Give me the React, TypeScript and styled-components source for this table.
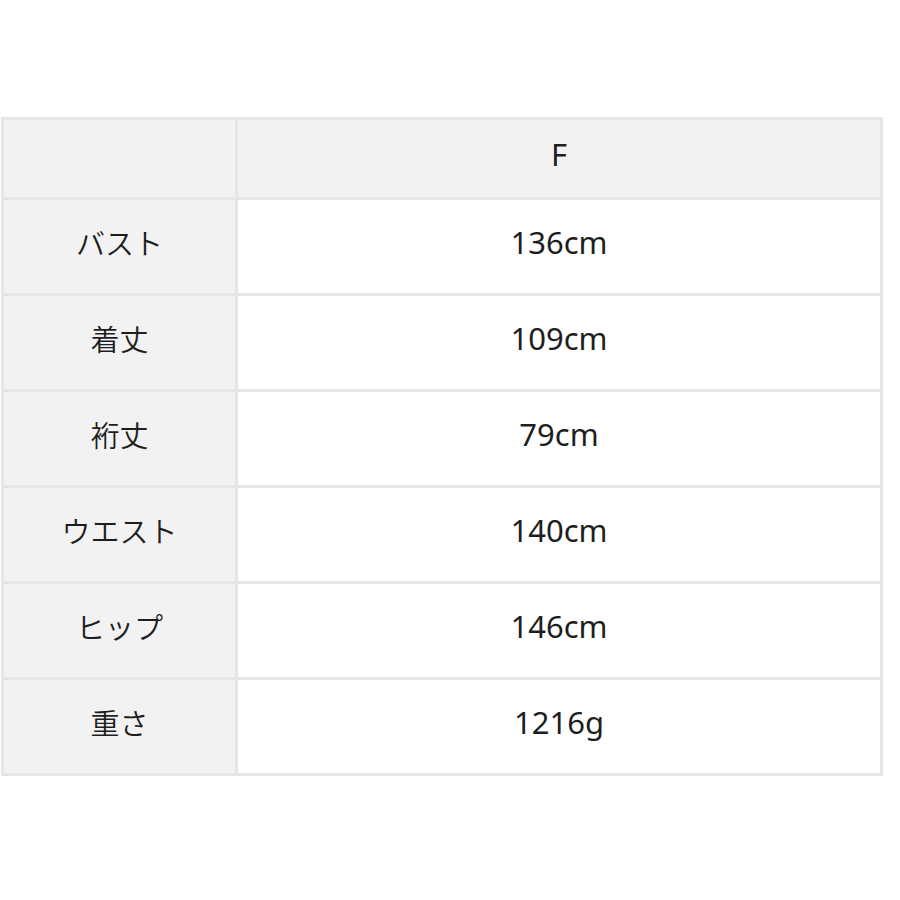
import React from "react";
import styled, { createGlobalStyle } from "styled-components";

const GlobalStyle = createGlobalStyle`
  html, body {
    margin: 0;
    padding: 0;
    background: #ffffff;
  }
  body {
    font-family: "Noto Sans", "Noto Sans CJK JP", sans-serif;
    color: #1e1e1e;
  }
`;

const Page = styled.div`
  padding: 117px 17px 0 1px;
`;

const SizeTable = styled.table`
  width: 882px;
  border-collapse: collapse;
  table-layout: fixed;
`;

const LabelCol = styled.col`
  width: 234px;
`;

const HeadRow = styled.tr`
  height: 80px;
`;

const Row = styled.tr`
  height: 96px;
`;

const Cell = styled.td<{ $shaded?: boolean }>`
  border: 3px solid #e6e6e6;
  background: ${(p) => (p.$shaded ? "#f2f2f2" : "#ffffff")};
  text-align: center;
  vertical-align: middle;
  line-height: 1;
  padding: 0 0 8px;
`;

const Label = styled(Cell)`
  font-family: "Noto Sans CJK JP", sans-serif;
  font-size: 29px;
  font-weight: 350;
`;

const Value = styled(Cell)`
  font-size: 31px;
  font-weight: 400;
`;

const rows = [
  { label: "バスト", value: "136cm" },
  { label: "着丈", value: "109cm" },
  { label: "裄丈", value: "79cm" },
  { label: "ウエスト", value: "140cm" },
  { label: "ヒップ", value: "146cm" },
  { label: "重さ", value: "1216g" },
];

const App = () => {
  return (
    <Page>
      <GlobalStyle />
      <SizeTable>
        <colgroup>
          <LabelCol />
          <col />
        </colgroup>
        <tbody>
          <HeadRow>
            <Label $shaded />
            <Value $shaded>F</Value>
          </HeadRow>
          {rows.map((r) => (
            <Row key={r.label}>
              <Label $shaded>{r.label}</Label>
              <Value>{r.value}</Value>
            </Row>
          ))}
        </tbody>
      </SizeTable>
    </Page>
  );
};

export default App;
